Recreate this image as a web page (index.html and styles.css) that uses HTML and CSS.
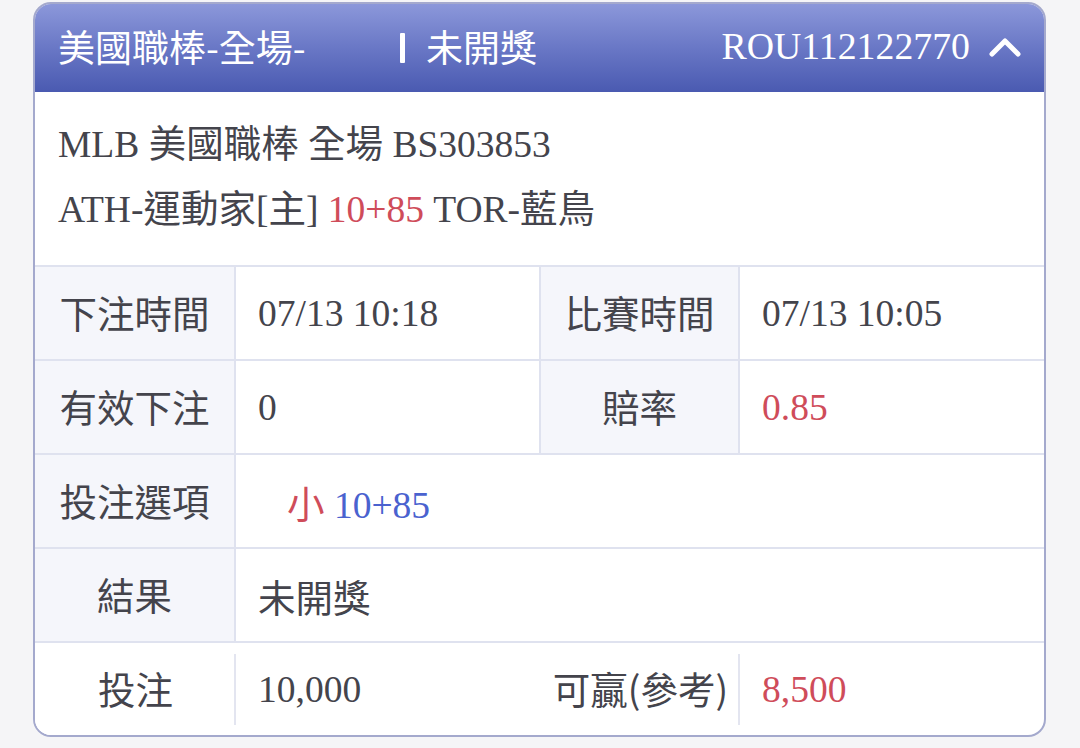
FILE: index.html
```html
<!DOCTYPE html>
<html lang="zh-Hant">
<head>
<meta charset="utf-8">
<link rel="stylesheet" href="styles.css">
</head>
<body>
<div class="card">
  <div class="header">
    <span class="h-title">美國職棒-全場-</span>
    <span class="h-status"><span class="bar"></span>未開獎</span>
    <span class="h-id">ROU112122770</span>
    <svg class="chev" width="34" height="22" viewBox="0 0 34 22"><path d="M4 18 L17 5 L30 18" fill="none" stroke="#fff" stroke-width="5" stroke-linecap="round" stroke-linejoin="round"/></svg>
  </div>
  <div class="info">
    <div class="line">MLB 美國職棒 全場 BS303853</div>
    <div class="line">ATH-運動家[主] <span class="red">10+85</span> TOR-藍鳥</div>
  </div>
  <div class="table">
    <div class="row">
      <div class="lbl">下注時間</div>
      <div class="val">07/13 10:18</div>
      <div class="lbl">比賽時間</div>
      <div class="val">07/13 10:05</div>
    </div>
    <div class="row">
      <div class="lbl">有效下注</div>
      <div class="val">0</div>
      <div class="lbl">賠率</div>
      <div class="val red">0.85</div>
    </div>
    <div class="row row2">
      <div class="lbl">投注選項</div>
      <div class="val wide"><span class="pick"><span class="red">小</span> <span class="blue">10+85</span></span></div>
    </div>
    <div class="row row2">
      <div class="lbl">結果</div>
      <div class="val wide">未開獎</div>
    </div>
    <div class="row last">
      <div class="lbl">投注</div>
      <div class="val">10,000</div>
      <div class="lbl">可贏(參考)</div>
      <div class="val red">8,500</div>
    </div>
  </div>
</div>
</body>
</html>
```
FILE: styles.css
```css
html, body {
  margin: 0;
  padding: 0;
}
body {
  background: #f5f5f7;
  width: 1080px;
  height: 748px;
  overflow: hidden;
  font-family: "Liberation Serif", "Noto Sans CJK TC", serif;
  color: #44444c;
}
.card {
  margin: 2px 0 0 33px;
  width: 1013px;
  box-sizing: border-box;
  height: 735px;
  border: 2px solid #a4a9cd;
  border-radius: 18px;
  overflow: hidden;
  background: #fff;
}
.header {
  height: 88px;
  margin-top: -2px;
  padding-top: 2px;
  padding-bottom: 4px;
  box-sizing: content-box;
  height: 84px;
  background: linear-gradient(180deg, #8d99db 0%, #6a78c6 50%, #4a5ab1 100%);
  display: flex;
  align-items: center;
  padding-left: 23px;
  padding-right: 22px;
  color: #fff;
  font-size: 37px;
}
.h-title {
  font-family: "Noto Sans CJK TC", sans-serif;
  width: 342px;
}
.h-status {
  font-family: "Noto Sans CJK TC", sans-serif;
  display: flex;
  align-items: center;
}
.bar {
  display: inline-block;
  width: 5px;
  height: 30px;
  background: #fff;
  margin-right: 21px;
  margin-top: 4px;
  border-radius: 1px;
}
.h-id {
  margin-left: auto;
  font-size: 37.8px;
  margin-right: 18px;
}
.chev {
  display: block;
  margin-top: 2px;
}
.info {
  padding: 20px 0 23px 23px;
  font-size: 37.5px;
  border-bottom: 2px solid #dfe2ef;
}
.line {
  line-height: 65px;
}
.red { color: #cf4c5a; }
.blue { color: #4a62cf; }
.row {
  display: grid;
  grid-template-columns: 201px 305px 199px 1fr;
  height: 92px;
  border-bottom: 2px solid #dfe2ef;
  font-size: 37.5px;
}
.row.row2 {
  grid-template-columns: 201px 1fr;
}
.row.last {
  border-bottom: none;
  height: 93px;
}
.lbl, .val {
  display: flex;
  align-items: center;
}
.lbl {
  justify-content: center;
  background: #f5f6fb;
  font-family: "Noto Sans CJK TC", sans-serif;
  border-right: 2px solid #dfe2ef;
  padding-bottom: 4px;
}
.val {
  padding-left: 22px;
  border-right: 2px solid #dfe2ef;
}
.row > :last-child {
  border-right: none;
}
.pick {
  padding-left: 29px;
}
.pick .red {
  font-family: "Noto Sans CJK TC", sans-serif;
}
.last .lbl {
  background: #fff;
  border-right: none;
}
.last .val {
  border-right: none;
  position: relative;
}
.last .val::before {
  content: "";
  position: absolute;
  left: -2px;
  top: 11px;
  bottom: 11px;
  width: 2px;
  background: #e3e5f0;
}
```
